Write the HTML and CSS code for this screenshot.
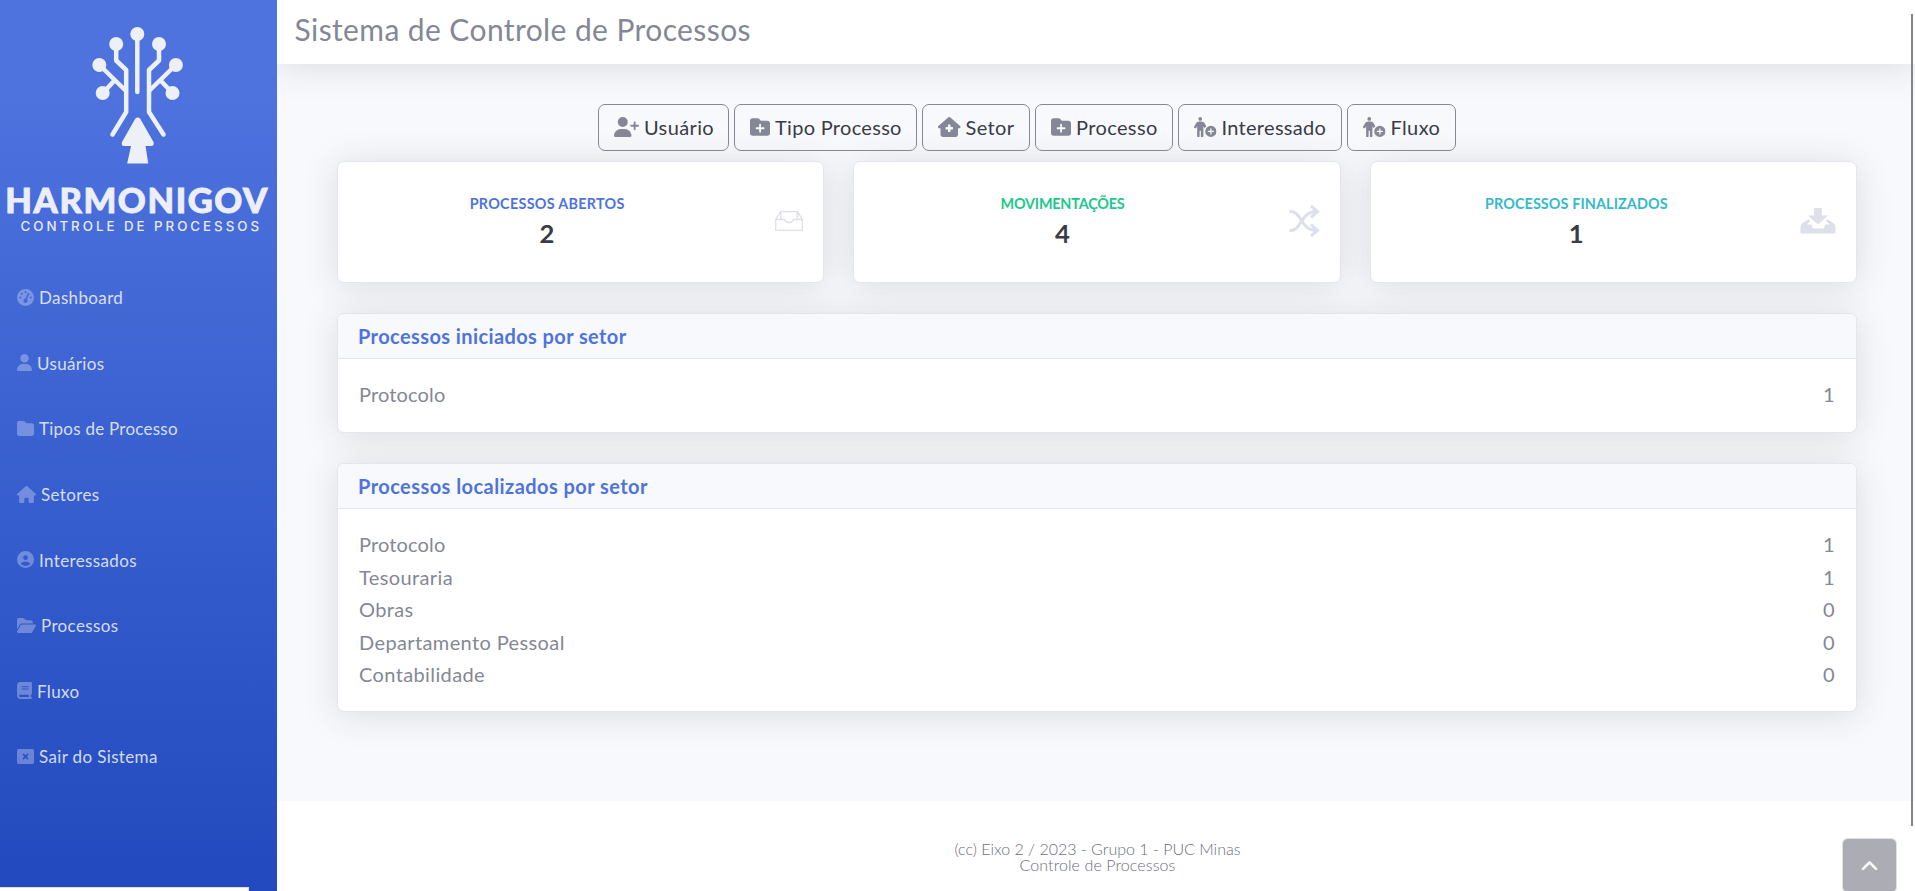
FILE: index.html
```
<!DOCTYPE html>
<html lang="pt-BR">
<head>
<meta charset="utf-8">
<title>Sistema de Controle de Processos</title>
<link rel="stylesheet" href="styles.css">
</head>
<body>
<svg class="defs" width="0" height="0">
  <symbol id="folder-plus" viewBox="0 0 512 512"><path fill-rule="evenodd" d="M64 480H448c35.300 0 64-28.700 64-64V160c0-35.300-28.700-64-64-64H288c-10 0-19.600-4.700-25.600-12.800L243 57.600C231 41.500 212 32 192 32H64C28.700 32 0 60.700 0 96V416c0 35.300 28.700 64 64 64zM235 378V311H168a23 23 0 0 1 0-46H235V198a23 23 0 0 1 46 0V265H348a23 23 0 0 1 0 46H281V378a23 23 0 0 1-46 0z"/></symbol>
  <symbol id="person-plus" viewBox="0 0 576 512"><path fill-rule="evenodd" d="M160 0a48 48 0 1 1 0 96 48 48 0 1 1 0-96zM131 112h58c34 0 65 18 82 47l45 76a192 192 0 0 0-44 56l-32-54v251a24 24 0 0 1-64 0V352h-32v136a24 24 0 0 1-64 0V237l-21 36a32 32 0 0 1-55-33l50-81c17-29 44-47 77-47zM432 224a144 144 0 1 1 0 288 144 144 0 1 1 0-288zm16 80a16 16 0 0 0-32 0v48h-48a16 16 0 0 0 0 32h48v48a16 16 0 0 0 32 0v-48h48a16 16 0 0 0 0-32h-48z"/></symbol>
</svg>
<div class="page">
  <aside class="sidebar">
    <svg class="logo" width="277" height="250" viewBox="0 0 277 250">
      <g fill="none" stroke="#eef0f8" stroke-width="4.500" stroke-linecap="round" stroke-linejoin="round">
        <path d="M137.300 34V92"/>
        <path d="M116.200 44V60.500L126.200 70V112L112.500 134.500"/>
        <path d="M99.500 65L125.500 90.500M103 93L113.500 81.500"/>
        <path d="M159 44V60.500L149 70V112L163.500 134.500"/>
        <path d="M175.700 65L149.500 90.500M172.500 93L161.500 81.500"/>
      </g>
      <g fill="#eef0f8">
        <circle cx="137.300" cy="34" r="7"/><circle cx="116.200" cy="44" r="7"/><circle cx="159" cy="44" r="7"/>
        <circle cx="99.300" cy="65" r="7"/><circle cx="175.900" cy="65" r="7"/><circle cx="102.700" cy="93" r="7"/><circle cx="172.500" cy="93" r="7"/>
        <path d="M135.200 118.800Q137.700 116 140.200 118.800L153.500 142Q154.500 145.800 151 146H145.500L148.300 163.500H127.200L131 146H124Q121 145.800 122 142Z"/>
      </g>
      <text class="brand" x="5.300" y="213" textLength="262" lengthAdjust="spacing">HARMONIGOV</text>
      <text class="tagline" x="20.500" y="230.500" textLength="238.500" lengthAdjust="spacing">CONTROLE DE PROCESSOS</text>
    </svg>
    <nav class="menu">
      <a class="item"><svg class="w17" viewBox="0 0 512 512"><path fill-rule="evenodd" d="M0 256a256 256 0 1 1 512 0A256 256 0 1 1 0 256zM288 96a32 32 0 1 0-64 0 32 32 0 1 0 64 0zM256 416c35 0 64-29 64-64 0-17-7-33-18-45l69-157a24 24 0 0 0-44-20l-69 158c-37 1-66 29-66 64s29 64 64 64zM176 144a32 32 0 1 0-64 0 32 32 0 1 0 64 0zM96 288a32 32 0 1 0 0-64 32 32 0 1 0 0 64zm352-32a32 32 0 1 0-64 0 32 32 0 1 0 64 0z"/></svg><span>Dashboard</span></a>
      <a class="item"><svg class="w15" viewBox="0 0 448 512"><path d="M224 256A128 128 0 1 0 224 0a128 128 0 1 0 0 256zm-45.700 48C79.800 304 0 383.800 0 482.300C0 498.700 13.300 512 29.700 512H418.300c16.400 0 29.700-13.300 29.700-29.700C448 383.800 368.200 304 269.700 304H178.300z"/></svg><span>Usuários</span></a>
      <a class="item tight"><svg class="w17" viewBox="0 0 512 512"><path d="M64 480H448c35.300 0 64-28.700 64-64V160c0-35.300-28.700-64-64-64H288c-10.100 0-19.600-4.700-25.600-12.800L243.200 57.600C231.100 41.500 212.100 32 192 32H64C28.700 32 0 60.700 0 96V416c0 35.300 28.700 64 64 64z"/></svg><span>Tipos de Processo</span></a>
      <a class="item"><svg class="w19" viewBox="0 0 576 512"><path d="M575.800 255.500c0 18-15 32.100-32 32.100h-32l.7 160.200V472c0 22-18 40-40 40H392c-22 0-40-18-40-40V384c0-17.700-14.300-32-32-32H256c-17.700 0-32 14.300-32 32v88c0 22-18 40-40 40H104c-22 0-40-18-40-40V287.600H32c-18 0-32-14-32-32.100 0-9 3-17 10-24L266.400 8c7-7 15-8 22-8s15 2 21 7L564.800 231.500c8 7 12 15 11 24z"/></svg><span>Setores</span></a>
      <a class="item"><svg class="w17" viewBox="0 0 512 512"><path fill-rule="evenodd" d="M399 384.200C376.900 345.800 335.400 320 288 320H224c-47.400 0-88.900 25.800-111 64.200c35.200 39.200 86.200 63.800 143 63.800s107.800-24.700 143-63.800zM0 256a256 256 0 1 1 512 0A256 256 0 1 1 0 256zm256 16a72 72 0 1 0 0-144 72 72 0 1 0 0 144z"/></svg><span>Interessados</span></a>
      <a class="item"><svg class="w19" viewBox="0 0 576 512"><path d="M88.700 223.800L0 375.800V96C0 60.700 28.700 32 64 32H181.500c17 0 33.300 6.700 45.300 18.700l26.500 26.500c12 12 28.300 18.700 45.300 18.700H416c35.300 0 64 28.700 64 64v32H144c-22.800 0-43.800 12.100-55.300 31.800zm27.600 16.100C122.100 230 132.600 224 144 224H544c11.500 0 22 6.100 27.700 16.100s5.700 22.200-.1 32.100l-112 192C453.900 474 443.400 480 432 480H32c-11.500 0-22-6.100-27.700-16.100s-5.700-22.200 .1-32.100l112-192z"/></svg><span>Processos</span></a>
      <a class="item"><svg class="w15" viewBox="0 0 448 512"><path fill-rule="evenodd" d="M96 0C43 0 0 43 0 96V416c0 53 43 96 96 96H416c17.700 0 32-14.300 32-32s-14.300-32-32-32V384c17.700 0 32-14.300 32-32V32c0-17.700-14.300-32-32-32H96zm0 384H352v64H96c-17.700 0-32-14.300-32-32s14.300-32 32-32zm32-240c0-8.800 7.200-16 16-16H336c8.800 0 16 7.200 16 16s-7.200 16-16 16H144c-8.800 0-16-7.200-16-16zm16 48H336c8.800 0 16 7.200 16 16s-7.200 16-16 16H144c-8.800 0-16-7.200-16-16s7.200-16 16-16z"/></svg><span>Fluxo</span></a>
      <a class="item"><svg class="w17" viewBox="0 0 512 512"><path fill-rule="evenodd" d="M48 32H464a48 48 0 0 1 48 48V432a48 48 0 0 1-48 48H48a48 48 0 0 1-48-48V80A48 48 0 0 1 48 32zM209 175L256 222 303 175A24 24 0 0 1 337 209L290 256 337 303A24 24 0 0 1 303 337L256 290 209 337A24 24 0 0 1 175 303L222 256 175 209A24 24 0 0 1 209 175z"/></svg><span>Sair do Sistema</span></a>
    </nav>
    <div class="statusbar"></div>
  </aside>
  <div class="main">
    <header class="topbar"><h1>Sistema de Controle de Processos</h1></header>
    <main class="content">
      <div class="actions">
        <a class="btn b1"><svg class="w25" viewBox="0 0 640 512"><path d="M96 128a128 128 0 1 1 256 0A128 128 0 1 1 96 128zM0 482.300C0 383.800 79.800 304 178.300 304h91.400C368.200 304 448 383.800 448 482.300c0 16.400-13.300 29.700-29.700 29.700H29.700C13.300 512 0 498.700 0 482.300zM504 312V248H440c-13.300 0-24-10.700-24-24s10.700-24 24-24h64V136c0-13.300 10.700-24 24-24s24 10.700 24 24v64h64c13.300 0 24 10.700 24 24s-10.700 24-24 24H552v64c0 13.300-10.700 24-24 24s-24-10.700-24-24z"/></svg><span>Usuário</span></a>
        <a class="btn b2"><svg class="w20"><use href="#folder-plus"/></svg><span>Tipo Processo</span></a>
        <a class="btn b3"><svg class="w22" viewBox="0 0 576 512"><path fill-rule="evenodd" d="M575.800 255.500c0 18-15 32.100-32 32.100h-32l.7 160.400c0 36-28 64-64 64H128c-36 0-64-28-64-64V287.600H32c-18 0-32-14-32-32.100 0-9 3-17 10-24L266.400 8c7-7 15-8 22-8s15 2 21 7L564.800 231.500c8 7 12 15 11 24zM256 208v48h-48c-9 0-16 7-16 16v32c0 9 7 16 16 16h48v48c0 9 7 16 16 16h32c9 0 16-7 16-16v-48h48c9 0 16-7 16-16v-32c0-9-7-16-16-16h-48v-48c0-9-7-16-16-16h-32c-9 0-16 7-16 16z"/></svg><span>Setor</span></a>
        <a class="btn b4"><svg class="w20"><use href="#folder-plus"/></svg><span>Processo</span></a>
        <a class="btn b5"><svg class="w22"><use href="#person-plus"/></svg><span>Interessado</span></a>
        <a class="btn b6"><svg class="w22"><use href="#person-plus"/></svg><span>Fluxo</span></a>
      </div>
      <div class="stats">
        <section class="card stat open">
          <div class="figures"><div class="label">PROCESSOS ABERTOS</div><div class="value">2</div></div>
          <div class="pic"><svg width="28" height="20" viewBox="0 0 28 20"><path fill="none" stroke="#dddfeb" stroke-width="1.300" d="M.7 8.500L5.500 .7H22.500L27.300 8.500V19.300H.7ZM.7 8.500H9.500Q10.500 11.500 14 11.500T18.500 8.500H27.300M5.800 .7V8.500M22.200 .7V8.500"/></svg></div>
        </section>
        <section class="card stat moves">
          <div class="figures"><div class="label">MOVIMENTAÇÕES</div><div class="value">4</div></div>
          <div class="pic"><svg width="31" height="32" viewBox="0 0 31 32"><g fill="none" stroke="#dddfeb" stroke-width="3"><path d="M.5 6.500C13 5 11 26 28 25.500M.5 25.500C13 27 11 6 28 6.500"/><path d="M22 1L28.500 6.500L22 12.500M22 19.500L28.500 25.500L22 31"/></g></svg></div>
        </section>
        <section class="card stat done">
          <div class="figures"><div class="label">PROCESSOS FINALIZADOS</div><div class="value">1</div></div>
          <div class="pic"><svg width="36" height="26" viewBox="0 0 36 26"><path fill="#dddfeb" d="M14.200 0H21.800V7.500H28L18 16.500L8 7.500H14.200ZM8.500 11.300L10.300 12.800L7 16.500H11.500L12.800 20.500H24L25 16.500H29.500L26 12.800L27.500 11.300L33.500 15Q35.500 16 35.500 19V24.500Q35 25.500 34 25.500H2Q1 25.500 .5 24.500V19Q.5 16 2.500 15Z"/></svg></div>
        </section>
      </div>
      <section class="card panel started">
        <h2>Processos iniciados por setor</h2>
        <div class="rows">
          <div class="row"><span class="near">Protocolo</span><span>1</span></div>
        </div>
      </section>
      <section class="card panel located">
        <h2>Processos localizados por setor</h2>
        <div class="rows">
          <div class="row"><span class="near">Protocolo</span><span>1</span></div>
          <div class="row"><span>Tesouraria</span><span>1</span></div>
          <div class="row"><span>Obras</span><span>0</span></div>
          <div class="row"><span>Departamento Pessoal</span><span>0</span></div>
          <div class="row"><span>Contabilidade</span><span>0</span></div>
        </div>
      </section>
    </main>
    <footer class="footer"><span>(cc) Eixo 2 / 2023 - Grupo 1 - PUC Minas</span><span class="second">Controle de Processos</span></footer>
  </div>
  <div class="scrollthumb"></div>
  <a class="to-top"><svg width="17" height="11" viewBox="0 0 17 11"><path fill="none" stroke="#fff" stroke-width="2.600" stroke-linecap="round" stroke-linejoin="round" d="M2 8.800L8.500 2.300L15 8.800"/></svg></a>
</div>
</body>
</html>
```
FILE: styles.css
```
* { box-sizing: border-box; }
body { margin: 0; font: 20px/30px Lato, "Noto Sans", sans-serif; letter-spacing: .38px; color: #858796; background: #fff; }
.defs { position: absolute; }
h1, h2 { margin: 0; }
.page { position: relative; display: flex; width: 1915px; height: 891px; overflow: hidden; }

.sidebar { position: relative; z-index: 2; display: flex; flex-direction: column; width: 277px; height: 891px; background: linear-gradient(180deg, #4e73df 10%, #224abe 100%); }
.logo { display: block; flex: none; }
.brand { font: 900 34.500px Lato, sans-serif; fill: #eceff9; stroke: #eceff9; stroke-width: .9px; letter-spacing: 0; }
.tagline { font: 500 13.300px Inter, sans-serif; fill: #e8ebf7; letter-spacing: 0; }
.menu { display: flex; flex-direction: column; padding: 14.500px 0 0 17px; }
.item { display: flex; align-items: center; gap: 5px; height: 65.600px; font-size: 17px; letter-spacing: .36px; color: rgba(255, 255, 255, .8); }
.item.tight { letter-spacing: .25px; }
.item span { padding-top: 2px; }
.item svg { height: 17px; fill: rgba(255, 255, 255, .3); }
.w15 { width: 15px; }
.w17 { width: 17px; }
.w19 { width: 19px; }
.statusbar { position: absolute; left: 0; bottom: 0; width: 249px; height: 4px; background: #fff; border-top: 1px solid #dadce0; border-right: 1px solid #dadce0; }

.main { display: flex; flex-direction: column; width: 1638px; background: #f8f9fc; }
.topbar { position: relative; flex: none; height: 64px; padding: 11px 0 0 17.500px; background: #fff; box-shadow: 0 3px 35px 0 rgba(58, 59, 69, .15); }
.topbar h1 { font-size: 30px; line-height: 36px; font-weight: 400; letter-spacing: .4px; }
.content { flex: none; height: 737px; padding: 40px 58px 0 60px; }

.actions { position: relative; z-index: 1; display: flex; gap: 5px; padding-left: 261px; }
.btn { display: flex; align-items: center; gap: 5px; height: 47px; padding: 0 0 2px 15px; border: 1px solid #858796; border-radius: 7px; color: #3a3b45; white-space: nowrap; }
.btn svg { flex: none; height: 20px; fill: #858796; }
.w20 { width: 20px; }
.w22 { width: 22.500px; }
.w25 { width: 25px; }
.b1 { width: 131px; }
.b2 { width: 183px; letter-spacing: .3px; }
.b3 { width: 108px; }
.b4 { width: 138px; }
.b5 { width: 164px; letter-spacing: .3px; }
.b6 { width: 109px; }

.card { background: #fff; border: 1px solid #e3e6f0; border-radius: 7px; box-shadow: 0 3px 35px 0 rgba(58, 59, 69, .15); }
.stats { display: grid; grid-template-columns: repeat(3, 1fr); gap: 29px; margin: 10px 0 30px; }
.stat { display: flex; height: 122px; padding: 0 20px; }
.figures { flex: 1; padding-top: 31px; text-align: center; font-weight: 700; }
.label { font-size: 14.400px; line-height: 22px; }
.value { font-size: 25.600px; line-height: 36px; color: #3a3b45; }
.pic { display: flex; align-items: center; justify-content: flex-end; height: 117px; }
.open .label { color: #4e73df; letter-spacing: .28px; }
.moves .label { color: #1cc88a; letter-spacing: -.2px; }
.done .label { color: #36b9cc; letter-spacing: .1px; }
.open .pic { width: 67px; }
.moves .pic { width: 69px; }
.done .pic { width: 74px; }

.panel h2 { height: 45px; padding-left: 20px; font-size: 20px; line-height: 44px; letter-spacing: .44px; color: #4e73df; background: #f8f9fc; border-bottom: 1px solid #e3e6f0; border-radius: 6px 6px 0 0; }
.started { height: 120px; margin-bottom: 30px; }
.started h2 { letter-spacing: .4px; }
.located { height: 249px; }
.rows { padding: 19px 21px 0; }
.row { display: flex; justify-content: space-between; height: 32.600px; line-height: 32.600px; }
.near { letter-spacing: .15px; }

.footer { display: flex; flex-direction: column; align-items: center; flex: 1; padding: 40px 0 0 3px; font-size: 16px; line-height: 16.400px; font-weight: 300; letter-spacing: 0; color: #6c6e7e; background: #fff; }
.second { letter-spacing: .1px; }
.scrollthumb { position: absolute; left: 1911px; top: 14px; width: 2px; height: 812px; background: #828583; }
.to-top { position: absolute; left: 1842px; top: 838px; display: flex; align-items: center; justify-content: center; width: 55px; height: 55px; background: #acacb5; border: 1px solid #dddfeb; border-radius: 6px; }
```
